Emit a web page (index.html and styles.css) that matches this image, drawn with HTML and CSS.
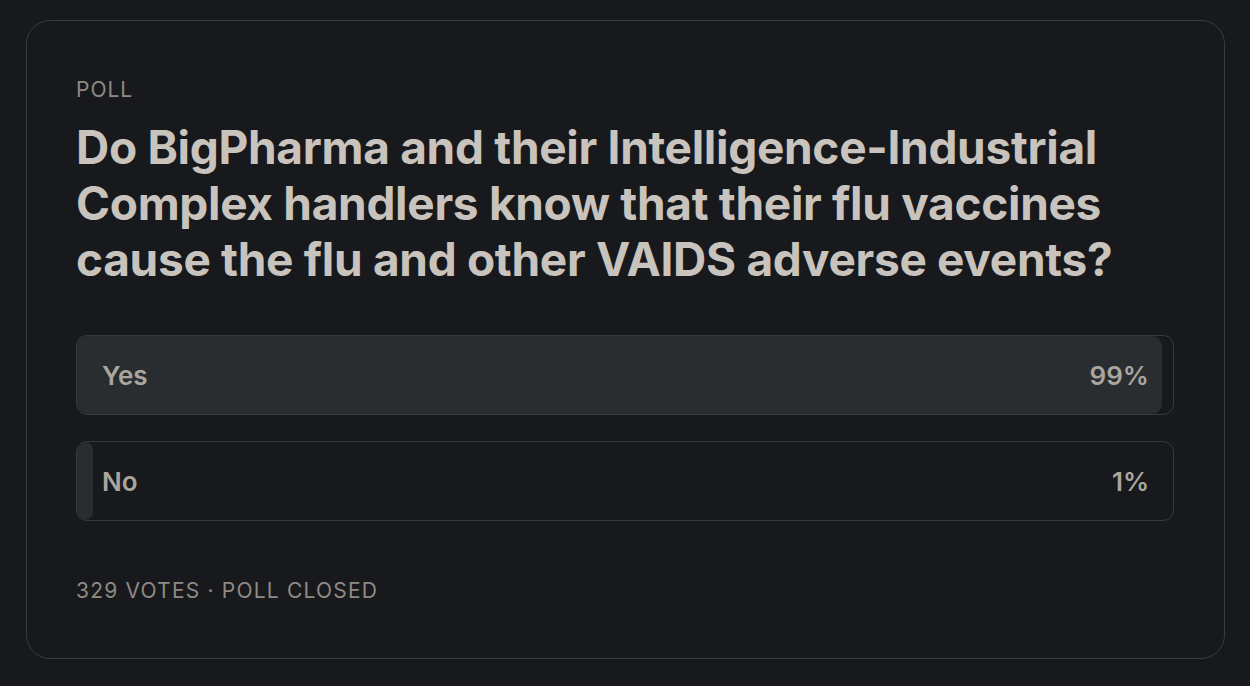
FILE: index.html
```html
<!DOCTYPE html>
<html>
<head>
<meta charset="utf-8">
<link rel="stylesheet" href="styles.css">
</head>
<body>
<div class="page">
  <section class="card">
    <div class="eyebrow">POLL</div>
    <h1 class="question">Do BigPharma and their Intelligence-Industrial Complex handlers know that their flu vaccines cause the flu and other VAIDS adverse events?</h1>
    <div class="options">
      <div class="option">
        <div class="fill" style="width: 99%"></div>
        <span class="label">Yes</span>
        <span class="pct">99%</span>
      </div>
      <div class="option">
        <div class="fill" style="width: 1.5%"></div>
        <span class="label">No</span>
        <span class="pct">1%</span>
      </div>
    </div>
    <div class="meta">329 VOTES · POLL CLOSED</div>
  </section>
</div>
</body>
</html>
```

FILE: styles.css
```css
html, body {
  margin: 0;
  padding: 0;
  background: #18191c;
}
body {
  font-family: Inter, "Noto Sans", sans-serif;
  width: 1250px;
  height: 686px;
  overflow: hidden;
}
.page {
  padding: 20px 25px 26px 26px;
}
.card {
  border: 1.5px solid #3b3c40;
  border-radius: 24px;
  padding: 56px 50px 56px 49px;
  height: 639px;
  box-sizing: border-box;
}
.eyebrow {
  color: #8f8a84;
  font-size: 21px;
  letter-spacing: 1px;
  line-height: 26px;
}
.question {
  margin: 16px 0 0 0;
  color: #c8c3bc;
  font-size: 46px;
  font-weight: 700;
  line-height: 56px;
  letter-spacing: -0.3px;
}
.options {
  margin-top: 48px;
  display: flex;
  flex-direction: column;
  gap: 26px;
}
.option {
  position: relative;
  height: 80px;
  border: 1.5px solid #38393c;
  border-radius: 11px;
  box-sizing: border-box;
  display: flex;
  align-items: center;
  justify-content: space-between;
  padding: 0 24px 0 25px;
  overflow: hidden;
}
.fill {
  position: absolute;
  left: 0;
  top: 0;
  bottom: 0;
  background: #292d30;
  border-radius: 10px;
}
.label, .pct {
  position: relative;
  color: #aaa59d;
  font-size: 26px;
  font-weight: 600;
}
.meta {
  margin-top: 57px;
  color: #8f8a84;
  font-size: 21px;
  letter-spacing: 1.2px;
  line-height: 26px;
}
```
